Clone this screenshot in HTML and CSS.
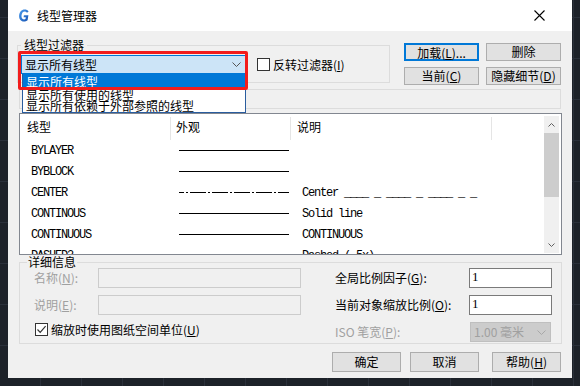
FILE: index.html
```html
<!DOCTYPE html>
<html lang="zh-CN">
<head>
<meta charset="utf-8">
<title>线型管理器</title>
<link rel="stylesheet" href="styles.css">
</head>
<body>
<div class="desk">
  <div class="dialog">
    <div class="titlebar">
      <svg class="logo" viewBox="0 0 11 13">
        <defs>
          <linearGradient id="lg" x1="0" y1="0" x2="1" y2="1">
            <stop offset="0" stop-color="#4a9ef0"/>
            <stop offset="1" stop-color="#1550b0"/>
          </linearGradient>
        </defs>
        <path d="M10.6 2.4 C9.7 1 8.3 0.4 6.7 0.4 C3.4 0.4 1.3 3 1.1 6.6 C0.9 10.2 2.8 12.6 5.8 12.6 C7.3 12.6 8.6 12.1 9.6 11.2 L10.4 6.3 L5.9 6.3 L5.6 8.3 L7.8 8.3 L7.5 10 C7.1 10.3 6.5 10.5 6 10.5 C4.1 10.5 3.3 8.8 3.5 6.6 C3.7 4.1 4.9 2.5 6.7 2.5 C7.7 2.5 8.4 2.9 9 3.7 Z" fill="url(#lg)"/>
      </svg>
      <span class="title">线型管理器</span>
      <svg class="close" viewBox="0 0 11 11"><path d="M0.5 0.5 L10.5 10.5 M10.5 0.5 L0.5 10.5" stroke="#000" stroke-width="1.1" fill="none"/></svg>
    </div>

    <div class="content">
      <div class="toprow">
        <fieldset class="filter">
          <legend>线型过滤器</legend>
          <div class="filter-row">
            <div class="combo-wrap">
              <div class="combo">
                <span>显示所有线型</span>
                <svg class="chev" viewBox="0 0 9 5"><path d="M0.5 0.5 L4.5 4.5 L8.5 0.5" stroke="#555" fill="none"/></svg>
              </div>
              <div class="dropdown">
                <div class="opt sel">显示所有线型</div>
                <div class="opt">显示所有使用的线型</div>
                <div class="opt">显示所有依赖于外部参照的线型</div>
              </div>
              <div class="highlight"></div>
            </div>
            <div class="check">
              <span class="box"></span>
              <span>反转过滤器(<u>I</u>)</span>
            </div>
          </div>
        </fieldset>
        <div class="btngrid">
          <button class="btn focus">加载(<u>L</u>)...</button>
          <button class="btn">删除</button>
          <button class="btn">当前(<u>C</u>)</button>
          <button class="btn">隐藏细节(<u>D</u>)</button>
        </div>
      </div>

      <div class="curbar"></div>

      <div class="list">
        <div class="table">
          <div class="thead">
            <div class="th c1">线型</div>
            <div class="th c2">外观</div>
            <div class="th c3">说明</div>
          </div>
          <div class="tr">
            <div class="td c1 mono">BYLAYER</div>
            <div class="td c2"><svg class="ln" viewBox="0 0 110 3"><line x1="0" y1="1.5" x2="110" y2="1.5" stroke="#000" stroke-width="1"/></svg></div>
            <div class="td c3 mono"></div>
          </div>
          <div class="tr">
            <div class="td c1 mono">BYBLOCK</div>
            <div class="td c2"><svg class="ln" viewBox="0 0 110 3"><line x1="0" y1="1.5" x2="110" y2="1.5" stroke="#000" stroke-width="1"/></svg></div>
            <div class="td c3 mono"></div>
          </div>
          <div class="tr">
            <div class="td c1 mono">CENTER</div>
            <div class="td c2"><svg class="ln" viewBox="0 0 110 3"><line x1="0" y1="1.5" x2="110" y2="1.5" stroke="#000" stroke-width="1" stroke-dasharray="16 2 2 2" stroke-dashoffset="11"/></svg></div>
            <div class="td c3 mono">Center ____ _ ____ _ ____ _ _</div>
          </div>
          <div class="tr">
            <div class="td c1 mono">CONTINOUS</div>
            <div class="td c2"><svg class="ln" viewBox="0 0 110 3"><line x1="0" y1="1.5" x2="110" y2="1.5" stroke="#000" stroke-width="1"/></svg></div>
            <div class="td c3 mono">Solid line</div>
          </div>
          <div class="tr">
            <div class="td c1 mono">CONTINUOUS</div>
            <div class="td c2"><svg class="ln" viewBox="0 0 110 3"><line x1="0" y1="1.5" x2="110" y2="1.5" stroke="#000" stroke-width="1"/></svg></div>
            <div class="td c3 mono">CONTINUOUS</div>
          </div>
          <div class="tr">
            <div class="td c1 mono">DASHED2</div>
            <div class="td c2"><svg class="ln" viewBox="0 0 110 3"><line x1="0" y1="1.5" x2="110" y2="1.5" stroke="#000" stroke-width="1" stroke-dasharray="6 3"/></svg></div>
            <div class="td c3 mono">Dashed (.5x)</div>
          </div>
        </div>
        <div class="scroll">
          <div class="arrow"><svg viewBox="0 0 7 4"><path d="M0.5 3.5 L3.5 0.5 L6.5 3.5" stroke="#606060" fill="none"/></svg></div>
          <div class="thumb"></div>
          <div class="track"></div>
          <div class="arrow"><svg viewBox="0 0 7 4"><path d="M0.5 0.5 L3.5 3.5 L6.5 0.5" stroke="#606060" fill="none"/></svg></div>
        </div>
      </div>

      <fieldset class="details">
        <legend>详细信息</legend>
        <div class="dgrid">
          <div class="lbl dis">名称(<u>N</u>):</div>
          <div class="tb disabled"></div>
          <div></div>
          <div class="lbl">全局比例因子(<u>G</u>):</div>
          <div class="tb input">1</div>

          <div class="lbl dis">说明(<u>E</u>):</div>
          <div class="tb disabled"></div>
          <div></div>
          <div class="lbl">当前对象缩放比例(<u>O</u>):</div>
          <div class="tb input">1</div>

          <div class="check2">
            <span class="box"><svg viewBox="0 0 11 11"><path d="M1.5 5.5 L4.2 8.3 L9.6 2.2" stroke="#333" stroke-width="1.2" fill="none"/></svg></span>
            <span>缩放时使用图纸空间单位(<u>U</u>)</span>
          </div>
          <div class="lbl dis iso">ISO 笔宽(<u>P</u>):</div>
          <div class="sel-dis"><span>1.00 毫米</span><svg class="chev" viewBox="0 0 9 5"><path d="M0.5 0.5 L4.5 4.5 L8.5 0.5" stroke="#a8a8a8" fill="none"/></svg></div>
        </div>
      </fieldset>

      <div class="actions">
        <button class="btn abtn">确定</button>
        <button class="btn abtn b2">取消</button>
        <button class="btn abtn b3">帮助(<u>H</u>)</button>
      </div>
    </div>
  </div>
</div>
</body>
</html>
```

FILE: styles.css
```css
* { box-sizing: border-box; }
html, body { margin: 0; padding: 0; }
body {
  width: 580px;
  height: 386px;
  overflow: hidden;
  font-family: "Noto Sans CJK SC", "Noto Sans", sans-serif;
  font-size: 12px;
  color: #000;
  background:
    repeating-linear-gradient(90deg, transparent 0 40px, #2a303a 40px 41px),
    repeating-linear-gradient(0deg, transparent 0 40px, #2a303a 40px 41px),
    #1d2229;
}
.desk { padding-left: 8px; height: 386px; }
.dialog {
  width: 564px;
  height: 378px;
  background: #f0f0f0;
  display: flex;
  flex-direction: column;
}
.titlebar {
  height: 31px;
  flex: none;
  background: #fff;
  display: flex;
  align-items: center;
  padding-left: 10px;
}
.logo { width: 11px; height: 13px; margin-right: 8px; }
.title { flex: 1; line-height: 16px; }
.close { width: 11px; height: 11px; margin-right: 27px; }

.content { padding: 0 10px 0 11px; }

.toprow { display: flex; align-items: flex-start; margin-top: 6px; }

fieldset { margin: 0; border: 1px solid #dcdcdc; min-width: 0; }

.filter {
  width: 373px;
  margin-left: -2px;
  padding: 2px 0 8px 3px;
}
.filter legend { padding: 0 3px; line-height: 16px; }
.filter-row { display: flex; align-items: center; }

.combo-wrap { position: relative; width: 225px; height: 19px; }
.combo {
  height: 19px;
  background: #cce4f7;
  border: 1px solid #0078d7;
  display: flex;
  align-items: center;
  padding-left: 3px;
  line-height: 16px;
}
.combo span { flex: 1; }
.chev { width: 9px; height: 5px; margin-right: 4px; }

.dropdown {
  position: absolute;
  left: 1px;
  right: 0;
  top: 19px;
  background: #fff;
  border: 1px solid #2a5d9e;
  border-top: 0;
  padding-bottom: 1px;
  z-index: 2;
}
.opt { line-height: 11px; height: 11px; padding-left: 3px; white-space: nowrap; }
.opt.sel { height: 15px; line-height: 15px; background: #0078d7; color: #fff; }

.highlight {
  position: absolute;
  left: -3px;
  right: -2px;
  top: -4px;
  height: 39px;
  border: 3px solid #f21c1c;
  border-radius: 2px;
  z-index: 3;
}

.check { display: flex; align-items: center; margin-left: 11px; line-height: 16px; }
.check .box, .check2 .box {
  width: 13px;
  height: 13px;
  border: 1px solid #333;
  background: #fff;
  margin-right: 3px;
  display: flex;
}
.check2 .box svg { width: 11px; height: 11px; }

.btngrid {
  display: grid;
  grid-template-columns: 75px 75px;
  grid-auto-rows: 18px;
  gap: 6px 7px;
  margin: 6px 0 0 14px;
}
.btn {
  font: inherit;
  font-size: 12px;
  color: #000;
  background: #e1e1e1;
  border: 1px solid #adadad;
  padding: 0;
  line-height: 16px;
  white-space: nowrap;
}
.btn.focus { border: 2px solid #0078d7; }

.curbar {
  margin-top: 4px;
  height: 20px;
  width: 542px;
  border: 1px solid #dcdcdc;
}

.list {
  margin-top: 4px;
  height: 142px;
  width: 543px;
  border: 1px solid #828790;
  background: #fff;
  display: flex;
  overflow: hidden;
}
.table { flex: 1; overflow: hidden; }
.thead { display: flex; height: 26px; }
.th {
  height: 23px;
  margin-top: 3px;
  line-height: 20px;
  border-right: 1px solid #e5e5e5;
  padding-left: 6px;
}
.th.c1 { padding-left: 7px; }
.th.c2 { padding-left: 5px; }
.c1 { width: 151px; flex: none; }
.c2 { width: 120px; flex: none; }
.c3 { width: 201px; flex: none; }
.tr { display: flex; height: 21px; align-items: center; }
.td { white-space: nowrap; overflow: visible; }
.td.c1 { padding-left: 11px; }
.td.c2 { padding-left: 8px; display: flex; align-items: center; }
.td.c3 { padding-left: 11px; }
.mono {
  font-family: "Liberation Mono", "DejaVu Sans Mono", monospace;
  font-size: 12px;
  letter-spacing: -1.2px;
  line-height: 14px;
}
.ln { width: 110px; height: 3px; display: block; }

.scroll {
  width: 15px;
  flex: none;
  margin: 2px 2px 1px 0;
  background: #f0f0f0;
  display: flex;
  flex-direction: column;
}
.arrow { height: 17px; display: flex; align-items: center; justify-content: center; }
.arrow svg { width: 7px; height: 4px; }
.thumb { height: 64px; background: #cdcdcd; }
.track { flex: 1; }

.details {
  margin-top: 1px;
  padding: 0 9px 1px 7px;
}
.details legend { padding: 0 1px; line-height: 12px; }
.dgrid {
  display: grid;
  grid-template-columns: 64px 203px 34px 134px 83px;
  grid-template-rows: repeat(3, 20px);
  row-gap: 7px;
  margin-left: 7px;
  align-items: center;
}
.lbl { line-height: 20px; white-space: nowrap; }
.dis { color: #a0a0a0; }
.tb { height: 20px; }
.tb.disabled { background: #f0f0f0; border: 1px solid #cccccc; }
.tb.input {
  background: #fff;
  border: 1px solid #7a7a7a;
  padding-left: 2px;
  line-height: 15px;
  font-family: "Liberation Serif", serif;
  font-size: 13px;
}
.check2 {
  grid-column: 1 / 4;
  display: flex;
  align-items: center;
  margin-left: 1px;
  height: 15px;
  align-self: start;
  line-height: 15px;
}
.iso { grid-column: 4; }
.sel-dis {
  height: 20px;
  margin-left: 1px;
  margin-right: 1px;
  background: #cccccc;
  border: 1px solid #bfbfbf;
  color: #a0a0a0;
  display: flex;
  align-items: center;
  padding-left: 3px;
  line-height: 16px;
}
.sel-dis span { flex: 1; }

.actions {
  margin-top: 8px;
  display: flex;
  justify-content: flex-end;
  padding-right: 1px;
}
.abtn { width: 69px; height: 20px; }
.b2 { margin-left: 9px; }
.b3 { margin-left: 13px; }
```
